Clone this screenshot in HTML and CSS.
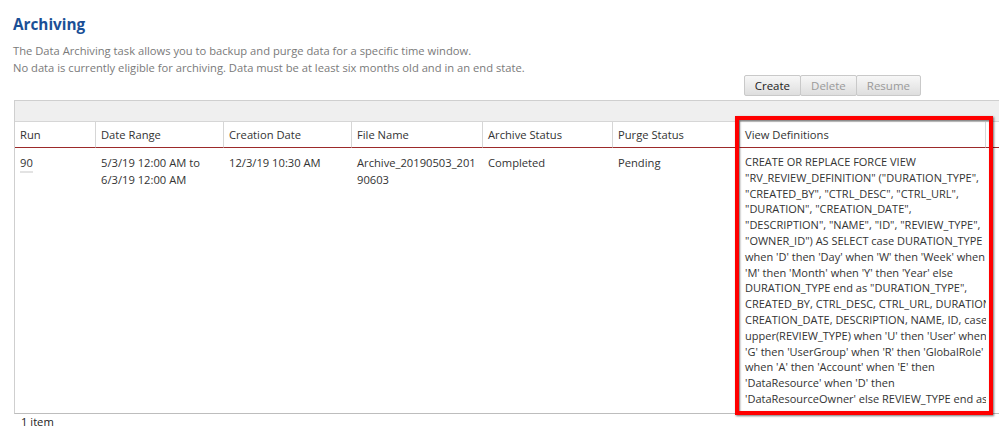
FILE: index.html
```html
<!DOCTYPE html>
<html lang="en">
<head>
<meta charset="utf-8">
<title>Archiving</title>
<link rel="stylesheet" href="styles.css">
</head>
<body>
<div class="page">
  <h1 class="title">Archiving</h1>
  <p class="desc">The Data Archiving task allows you to backup and purge data for a specific time window.<br>No data is currently eligible for archiving. Data must be at least six months old and in an end state.</p>
  <div class="actions">
    <button class="btn">Create</button>
    <button class="btn disabled">Delete</button>
    <button class="btn disabled">Resume</button>
  </div>
  <div class="grid">
    <div class="toolbar"></div>
    <div class="table">
      <div class="th">Run</div>
      <div class="th">Date Range</div>
      <div class="th">Creation Date</div>
      <div class="th">File Name</div>
      <div class="th">Archive Status</div>
      <div class="th">Purge Status</div>
      <div class="th">View Definitions</div>
      <div class="th last"></div>

      <div class="td"><span class="run">90</span></div>
      <div class="td">5/3/19 12:00 AM to<br>6/3/19 12:00 AM</div>
      <div class="td">12/3/19 10:30 AM</div>
      <div class="td">Archive_20190503_201<br>90603</div>
      <div class="td">Completed</div>
      <div class="td">Pending</div>
      <div class="td clip"><div class="sql">CREATE OR REPLACE FORCE VIEW<br>"RV_REVIEW_DEFINITION" ("DURATION_TYPE",<br>"CREATED_BY", "CTRL_DESC", "CTRL_URL",<br>"DURATION", "CREATION_DATE",<br>"DESCRIPTION", "NAME", "ID", "REVIEW_TYPE",<br>"OWNER_ID") AS SELECT case DURATION_TYPE<br>when 'D' then 'Day' when 'W' then 'Week' when<br>'M' then 'Month' when 'Y' then 'Year' else<br>DURATION_TYPE end as "DURATION_TYPE",<br>CREATED_BY, CTRL_DESC, CTRL_URL, DURATION,<br>CREATION_DATE, DESCRIPTION, NAME, ID, case<br>upper(REVIEW_TYPE) when 'U' then 'User' when<br>'G' then 'UserGroup' when 'R' then 'GlobalRole'<br>when 'A' then 'Account' when 'E' then<br>'DataResource' when 'D' then<br>'DataResourceOwner' else REVIEW_TYPE end as</div></div>
      <div class="td"></div>
    </div>
  </div>
  <div class="count">1 item</div>
</div>
<div class="highlight"></div>
</body>
</html>
```
FILE: styles.css
```css
html, body {
  margin: 0;
  padding: 0;
  overflow: hidden;
  background: #fff;
}
body {
  width: 999px;
  height: 428px;
  position: relative;
  font-family: "Open Sans", "Noto Sans", sans-serif;
  color: #333;
}
.page {
  padding: 13px 0 0 13px;
}
.title {
  margin: 0;
  font-size: 15.3px;
  line-height: 22px;
  font-weight: 700;
  color: #1a4f96;
}
.desc {
  margin: 7px 0 0;
  font-size: 11.2px;
  line-height: 17px;
  color: #7a7a7a;
}
.actions {
  display: flex;
  justify-content: flex-end;
  margin: -1px 78px 0 0;
}
.btn {
  height: 21px;
  padding: 0 10px;
  border: 1px solid #c9c9c9;
  margin-left: -1px;
  background: linear-gradient(#f7f7f7, #dedede);
  font-family: "Open Sans", "Noto Sans", sans-serif;
  font-size: 11.5px;
  color: #222;
  border-radius: 2px;
}
.btn.disabled {
  color: #9a9a9a;
}
.grid {
  margin: 4px 0 0 1px;
  border-top: 1px solid #cfcfcf;
  border-bottom: 1px solid #bdbdbd;
  border-left: 1px solid #cfcfcf;
  width: 1000px;
}
.toolbar {
  height: 20px;
  background: #efefef;
  border-bottom: 1px solid #d6d6d6;
}
.table {
  display: grid;
  grid-template-columns: 81px 128px 128px 131px 130px 127px 246px 1fr;
}
.th {
  height: 25px;
  line-height: 25px;
  padding-left: 5px;
  font-size: 11.2px;
  border-right: 1px solid #d6d6d6;
  border-bottom: 1px solid #9c2a2a;
  white-space: nowrap;
}
.th.last {
  border-right: 0;
}
.td {
  padding: 6px 0 6px 5px;
  font-size: 11.2px;
  line-height: 17px;
  white-space: nowrap;
}
.run {
  border-bottom: 2px solid #e3e3e3;
  padding-bottom: 1px;
}
.clip {
  overflow: hidden;
}
.sql {
  font-size: 11px;
  line-height: 15.8px;
}
.count {
  font-size: 11.2px;
  line-height: 15px;
  padding: 0 0 0 8px;
  color: #222;
}
.highlight {
  position: absolute;
  left: 735px;
  top: 116px;
  width: 250px;
  height: 291px;
  border: 4px solid #f00;
  box-shadow: 1px 1px 2px rgba(0,0,0,0.55), inset 1px 1px 2px rgba(0,0,0,0.55);
  pointer-events: none;
}
```
